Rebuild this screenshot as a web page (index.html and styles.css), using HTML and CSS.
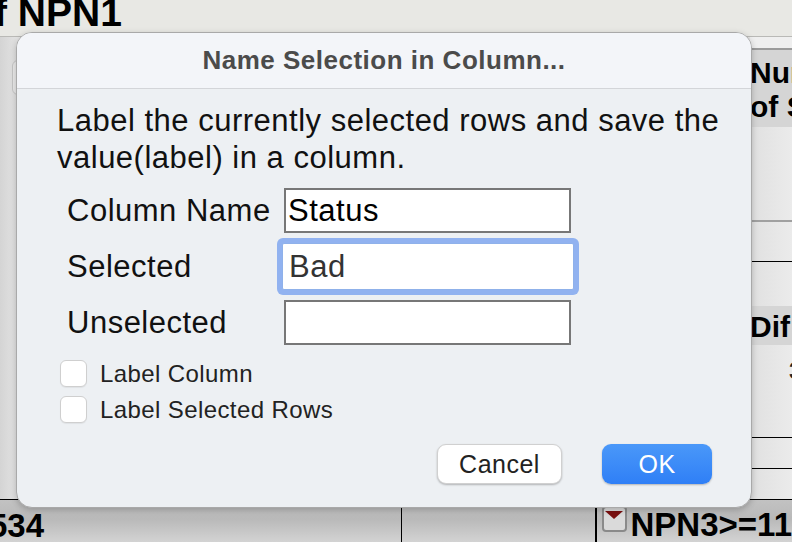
FILE: index.html
```html
<!DOCTYPE html>
<html>
<head>
    <title>Name Selection in Column</title>
    <link rel="stylesheet" href="styles.css">
</head>
<body>
    <div class="app">
        <div class="app-title"><span>f NPN1</span></div>

        <div class="app-main">
            <div class="side-left">
                <div class="side-tab"></div>
            </div>
            <div class="table-area"></div>
            <div class="side-right">
                <div class="col-gap"></div>
                <div class="col-head">Nur<br>of S</div>
                <div class="col-blank b1"></div>
                <div class="col-blank b2"></div>
                <div class="col-blank b3"></div>
                <div class="col-head small">Dif</div>
                <div class="col-blank b4"><span class="peek">3</span></div>
                <div class="col-blank b5"></div>
                <div class="col-blank b6"></div>
            </div>
        </div>

        <div class="summary-row">
            <div class="cell cell-count"><span>534</span></div>
            <div class="cell cell-empty"></div>
            <div class="cell cell-filter">
                <span class="drop-btn"><span class="drop-arrow"></span></span>
                <span>NPN3&gt;=11</span>
            </div>
        </div>
    </div>

    <div class="dialog">
        <div class="dialog-title">Name Selection in Column...</div>
        <div class="dialog-body">
            <p class="intro">Label the currently selected rows and save the value(label) in a column.</p>

            <div class="form">
                <label>Column Name</label>
                <input type="text" value="Status">
                <label>Selected</label>
                <input type="text" value="Bad" class="focused">
                <label>Unselected</label>
                <input type="text" value="">
            </div>

            <div class="checks">
                <div class="check-row"><span class="box"></span><span>Label Column</span></div>
                <div class="check-row"><span class="box"></span><span>Label Selected Rows</span></div>
            </div>

            <div class="buttons">
                <button class="btn">Cancel</button>
                <button class="btn btn-primary">OK</button>
            </div>
        </div>
    </div>
</body>
</html>
```

FILE: styles.css
```css
body {
    margin: 0;
    width: 792px;
    height: 542px;
    overflow: hidden;
    position: relative;
    font-family: "Liberation Sans", Arial, sans-serif;
}

/* Background app window */
.app {
    display: flex;
    flex-direction: column;
    height: 542px;
}

.app-title {
    height: 36px;
    border-bottom: 1px solid #b9b9b6;
    background: #e8e8e4;
    overflow: hidden;
    font-weight: bold;
    font-size: 39px;
    line-height: 36px;
    color: #000;
    white-space: nowrap;
}

.app-title span {
    display: block;
    margin-top: -5px;
    text-indent: -6px;
}

.app-main {
    flex: 1;
    display: flex;
    border-bottom: 1px solid #000;
    min-height: 0;
}

.side-left {
    width: 16px;
    background: linear-gradient(90deg, #d4d4d4, #e2e2e2);
    padding-top: 23px;
}

.side-tab {
    width: 10px;
    height: 33px;
    margin-left: 12px;
    border: 1px solid #c4c4c4;
    border-radius: 6px;
    background: #e9e9e9;
}

.table-area {
    flex: 1;
    background: #e4e4e4;
}

.side-right {
    width: 42px;
    display: flex;
    flex-direction: column;
    background: linear-gradient(90deg, #e0e0e0, #ebebeb);
    overflow: hidden;
    white-space: nowrap;
}

.col-gap {
    height: 11px;
    background: #efefef;
    border-bottom: 2px solid #9b9b9b;
}

.col-head {
    height: 65px;
    padding: 6px 0;
    background: #d5d5d5;
    font-weight: bold;
    font-size: 30px;
    line-height: 34px;
    color: #000;
}

.col-head.small {
    height: 39px;
    padding: 0;
    line-height: 41px;
}

.b1 {
    height: 93px;
    border-bottom: 2px solid #a0a0a0;
}

.b2 {
    height: 39px;
    border-bottom: 1px solid #000;
}

.b3 {
    height: 44px;
}

.b4 {
    height: 92px;
    border-bottom: 1px solid #000;
}

.b5 {
    height: 30px;
    border-bottom: 1px solid #000;
}

.b6 {
    flex: 1;
}

.peek {
    display: block;
    padding: 12px 0 0 39px;
    font-size: 24px;
    font-weight: bold;
    color: #222;
}

.summary-row {
    height: 42px;
    display: flex;
    background: linear-gradient(#c2c2c2, #b9b9b9 45%, #d3d3d3);
    overflow: hidden;
}

.cell {
    font-weight: bold;
    font-size: 33px;
    line-height: 38px;
    color: #000;
    white-space: nowrap;
    overflow: hidden;
}

.cell-count {
    width: 401px;
    border-right: 1px solid #000;
    padding-top: 7px;
    text-indent: -11px;
}

.cell-empty {
    width: 193px;
    border-right: 2px solid #000;
}

.cell-filter {
    flex: 1;
    display: flex;
    align-items: flex-start;
    gap: 4px;
    padding: 6px 0 0 5px;
}

.drop-btn {
    width: 22px;
    height: 19px;
    margin-top: 0;
    border: 2px solid #8a8a8a;
    border-radius: 4px;
    background: #dadada;
    display: flex;
    justify-content: center;
    padding-top: 3px;
}

.drop-arrow {
    width: 0;
    height: 0;
    border-left: 9px solid transparent;
    border-right: 9px solid transparent;
    border-top: 8px solid #7a1010;
}

/* Dialog window */
.dialog {
    position: absolute;
    left: 16px;
    top: 32px;
    width: 736px;
    box-sizing: border-box;
    border: 1px solid #a9a9a9;
    border-radius: 16px;
    overflow: hidden;
    background: #edf0f3;
    box-shadow: 0 2px 6px rgba(0, 0, 0, 0.22);
}

.dialog-title {
    height: 55px;
    border-bottom: 1px solid #d3d5d9;
    background: #f3f5f9;
    text-align: center;
    font-weight: bold;
    font-size: 26px;
    letter-spacing: 0.5px;
    line-height: 55px;
    color: #4b4b4b;
}

.dialog-body {
    padding: 13px 39px 23px 40px;
}

.intro {
    margin: 0 -30px 0 0;
    font-size: 31px;
    letter-spacing: 0.5px;
    line-height: 37px;
    color: #111;
}

.form {
    display: grid;
    grid-template-columns: 217px 287px;
    row-gap: 11px;
    align-items: center;
    margin: 12px 0 0 10px;
}

.form label {
    font-size: 31px;
    letter-spacing: 0.5px;
    line-height: 37px;
    color: #111;
    white-space: nowrap;
}

.form input {
    width: 287px;
    height: 45px;
    box-sizing: border-box;
    margin: 0;
    border: 2px solid #777;
    border-radius: 0;
    padding: 0 2px;
    background: #fff;
    font-family: "Liberation Sans", Arial, sans-serif;
    font-size: 31px;
    letter-spacing: 0.5px;
    color: #000;
    outline: none;
}

.form input.focused {
    width: 292px;
    height: 47px;
    margin: -1px 0 -1px -2px;
    border: 1px solid #8fb1ea;
    border-radius: 2px;
    padding: 0 6px;
    color: #333;
    box-shadow: 0 0 0 5px rgba(128, 167, 238, 0.85);
}

.checks {
    display: flex;
    flex-direction: column;
    gap: 9px;
    margin-top: 15px;
    padding-left: 3px;
}

.check-row {
    display: flex;
    align-items: center;
    gap: 13px;
    height: 27px;
    font-size: 24px;
    letter-spacing: 0.4px;
    color: #222;
}

.box {
    width: 27px;
    height: 27px;
    box-sizing: border-box;
    border: 1px solid #cfcfcf;
    border-radius: 6px;
    background: #fff;
    box-shadow: 0 1px 1px rgba(0, 0, 0, 0.06);
}

.buttons {
    display: flex;
    justify-content: flex-end;
    gap: 40px;
    margin-top: 21px;
}

.btn {
    width: 125px;
    height: 40px;
    border: 0.5px solid #d0d0d0;
    border-radius: 9px;
    background: #fff;
    box-shadow: 0 1px 2px rgba(0, 0, 0, 0.25);
    font-family: "Liberation Sans", Arial, sans-serif;
    font-size: 25px;
    letter-spacing: 0.5px;
    color: #222;
    padding: 0;
}

.btn-primary {
    width: 110px;
    border: none;
    background: linear-gradient(#4a98f9, #2f7ff6);
    color: #fff;
}
```
